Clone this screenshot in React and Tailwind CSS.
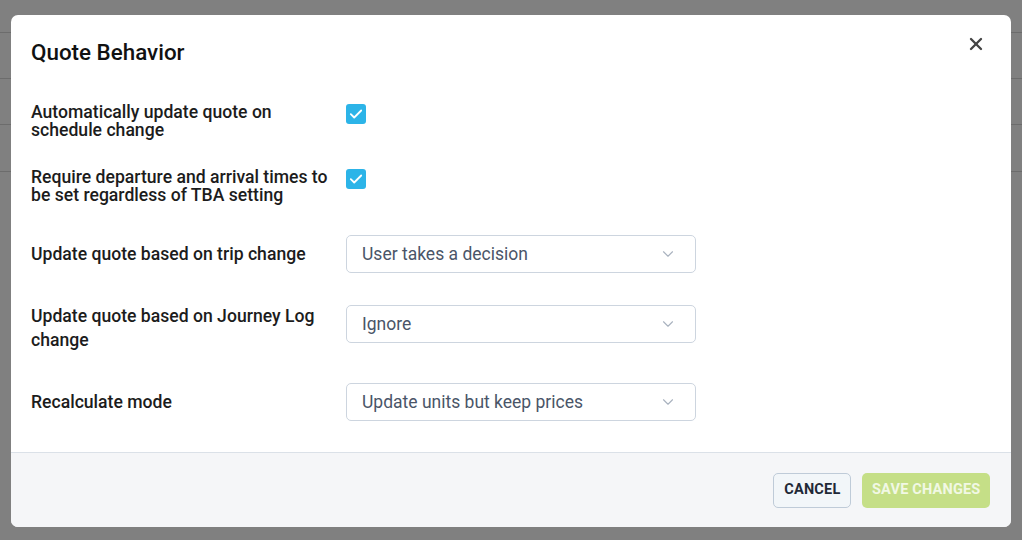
import { X, ChevronDown } from "lucide-react";

function Checkbox() {
    return (
        <div className="w-5 h-5 rounded-[3px] bg-[#2cb4e8] flex items-center justify-center mt-px">
            <svg width="16" height="16" viewBox="0 0 16 16" fill="none">
                <path d="M2.8 8.2l3.4 3.3 7-7" stroke="white" strokeWidth="1.8" strokeLinecap="round" strokeLinejoin="round" />
            </svg>
        </div>
    );
}

function Select({ value }) {
    return (
        <div className="w-[350px] h-[38px] border border-[#cdd5df] rounded-[5px] bg-white flex items-center justify-between pl-[15px] pr-[18px]">
            <span className="text-[17.5px] font-normal text-[#4a5568]">{value}</span>
            <ChevronDown className="w-[18px] h-[18px] text-[#a9b2bf]" strokeWidth={1.5} />
        </div>
    );
}

export default function App() {
    const bgRows = [33, 46, 46, 47];

    return (
        <div className="relative w-[1022px] h-[540px] overflow-hidden bg-[#808080]" style={{ fontFamily: "Roboto, 'Liberation Sans', sans-serif" }}>
            {/* page behind the overlay */}
            <div className="flex flex-col">
                {bgRows.map((h, i) => (
                    <div key={i} className="border-b border-[#6c6c6c] shrink-0" style={{ height: h }}></div>
                ))}
            </div>

            <div className="absolute left-[11px] top-[15px] w-[1000px] h-[512px] bg-white rounded-[7px] flex flex-col overflow-hidden">
                <div className="flex items-center justify-between pl-5 pr-[25px] h-[72px] shrink-0">
                    <h2 className="text-[22.4px] font-medium text-[#111] leading-none mt-[2px]">Quote Behavior</h2>
                    <X className="w-[20px] h-[20px] text-[#444] -mt-[15px]" strokeWidth={2.8} />
                </div>

                <div className="flex-1 pl-5 pt-[16px] text-[17.6px] font-medium text-[#1c1c1c]">
                    <div className="flex items-start">
                        <div className="w-[300px] leading-[18px]">Automatically update quote on schedule change</div>
                        <div className="ml-[15px]"><Checkbox /></div>
                    </div>

                    <div className="flex items-start mt-[29px]">
                        <div className="w-[300px] leading-[18px]">Require departure and arrival times to be set regardless of TBA setting</div>
                        <div className="ml-[15px]"><Checkbox /></div>
                    </div>

                    <div className="flex items-center mt-[31px]">
                        <div className="w-[300px] leading-6">Update quote based on trip change</div>
                        <div className="ml-[15px]"><Select value="User takes a decision" /></div>
                    </div>

                    <div className="flex items-start mt-[31px]">
                        <div className="w-[300px] leading-6">Update quote based on Journey Log change</div>
                        <div className="ml-[15px] mt-px"><Select value="Ignore" /></div>
                    </div>

                    <div className="flex items-center mt-[31px]">
                        <div className="w-[300px] leading-6">Recalculate mode</div>
                        <div className="ml-[15px]"><Select value="Update units but keep prices" /></div>
                    </div>
                </div>

                <div className="h-[75px] shrink-0 bg-[#f5f6f8] border-t border-[#dbe1e8] flex items-center justify-end gap-[11px] pr-[21px]">
                    <button className="h-[35px] px-[10px] rounded-[5px] border border-[#bfcbd8] bg-[#f2f6f9] text-[14.5px] font-bold text-[#1f2937] tracking-[0.2px]">CANCEL</button>
                    <button className="h-[35px] px-[9.5px] rounded-[5px] bg-[#c5df87] text-[14.5px] font-bold text-[#f1f8e4] tracking-[0.2px]">SAVE CHANGES</button>
                </div>
            </div>
        </div>
    );
}
